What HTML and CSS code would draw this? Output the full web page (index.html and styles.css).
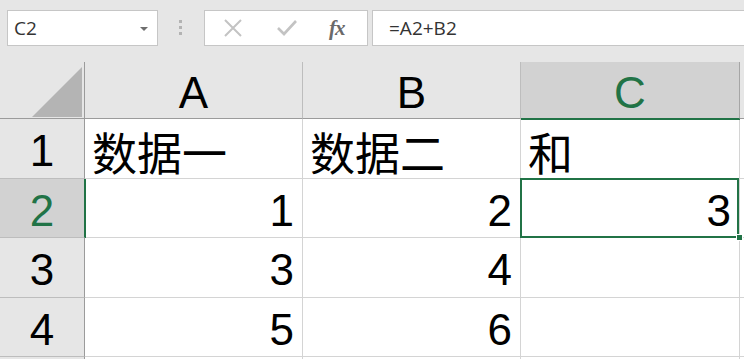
FILE: index.html
```html
<!doctype html>
<html lang="zh-CN">

<head>
  <meta charset="UTF-8" />
  <meta name="viewport" content="width=device-width, initial-scale=1.0" />
  <title>Sheet1</title>
  <link rel="stylesheet" href="styles.css">
</head>

<body>
  <div class="app">
    <div class="formula-bar">
      <div class="name-box">
        <span class="name-text">C2</span>
        <span class="caret"></span>
      </div>

      <div class="grip">
        <i></i><i></i><i></i>
      </div>

      <div class="fx-buttons">
        <svg class="fx-icon" width="20" height="18" viewBox="0 0 20 18">
          <path d="M2 1 L18 17 M18 1 L2 17" stroke="#c3c3c3" stroke-width="2" fill="none" />
        </svg>
        <svg class="fx-icon" width="20" height="16" viewBox="0 0 20 16">
          <path d="M1 8 L7 14 L19 1" stroke="#c3c3c3" stroke-width="2.6" fill="none" />
        </svg>
        <span class="fx-label"><i>f</i><i>x</i></span>
      </div>

      <div class="formula-input">=A2+B2</div>
    </div>

    <div class="sheet">
      <div class="corner"><span class="corner-tri"></span></div>
      <div class="col-head">A</div>
      <div class="col-head">B</div>
      <div class="col-head is-active">C</div>
      <div class="col-head col-rest"></div>

      <div class="row-head">1</div>
      <div class="cell">数据一</div>
      <div class="cell">数据二</div>
      <div class="cell">和</div>
      <div class="cell"></div>

      <div class="row-head is-active">2</div>
      <div class="cell num">1</div>
      <div class="cell num">2</div>
      <div class="cell num is-selected">3<span class="fill-handle"></span></div>
      <div class="cell"></div>

      <div class="row-head">3</div>
      <div class="cell num">3</div>
      <div class="cell num">4</div>
      <div class="cell"></div>
      <div class="cell"></div>

      <div class="row-head">4</div>
      <div class="cell num">5</div>
      <div class="cell num">6</div>
      <div class="cell"></div>
      <div class="cell"></div>

      <div class="row-head row-stub"></div>
      <div class="cell row-stub"></div>
      <div class="cell row-stub"></div>
      <div class="cell row-stub"></div>
      <div class="cell row-stub"></div>
    </div>
  </div>
</body>

</html>
```

FILE: styles.css
```css
* {
  margin: 0;
  padding: 0;
  box-sizing: border-box;
}

html,
body {
  height: 100%;
  width: 100%;
  overflow: hidden;
}

body {
  font-family: 'Liberation Sans', 'Noto Sans CJK SC', sans-serif;
  background-color: #e6e6e6;
}

.app {
  width: 744px;
  height: 359px;
  overflow: hidden;
}

/* formula bar */

.formula-bar {
  display: flex;
  align-items: stretch;
  height: 62px;
  padding: 10px 0 16px 7px;
  background-color: #e6e6e6;
  font-family: 'Open Sans', sans-serif;
  font-size: 19px;
  color: #333333;
}

.name-box {
  width: 151px;
  display: flex;
  align-items: center;
  justify-content: space-between;
  padding: 0 9px 0 6px;
  background-color: white;
  border: 1px solid #c6c6c6;
}

.caret {
  width: 0;
  height: 0;
  border-left: 4px solid transparent;
  border-right: 4px solid transparent;
  border-top: 4px solid #6e6e6e;
  margin-top: 2px;
}

.grip {
  width: 3px;
  margin-left: 21px;
  display: flex;
  flex-direction: column;
  gap: 3px;
  padding-top: 10px;
}

.grip i {
  display: block;
  width: 3px;
  height: 3px;
  background-color: #b3b3b3;
}

.fx-buttons {
  width: 164px;
  margin-left: 22px;
  display: flex;
  align-items: center;
  padding-left: 18px;
  gap: 34px;
  background-color: white;
  border: 1px solid #c6c6c6;
}

.fx-label {
  font-family: 'Liberation Serif', serif;
  font-size: 21px;
  font-weight: bold;
  color: #6a6a6a;
  letter-spacing: -1px;
  margin-left: -2px;
}

.formula-input {
  flex: 1;
  margin-left: 4px;
  margin-right: -2px;
  display: flex;
  align-items: center;
  padding-left: 16px;
  background-color: white;
  border: 1px solid #c6c6c6;
}

/* sheet grid */

.sheet {
  display: grid;
  grid-template-columns: 85px 218px 218px 219px 1fr;
  grid-template-rows: 57px 60px 59px 60px 59px 2px;
  background-color: white;
  font-size: 44px;
  color: #000000;
}

.corner,
.col-head,
.row-head {
  background-color: #e6e6e6;
  display: flex;
  align-items: center;
  justify-content: center;
}

.corner {
  position: relative;
  border-right: 1px solid #9b9b9b;
  border-bottom: 1px solid #9b9b9b;
}

.corner-tri {
  position: absolute;
  right: 2px;
  bottom: 1px;
  width: 0;
  height: 0;
  border-left: 50px solid transparent;
  border-bottom: 50px solid #b4b4b4;
}

.col-head {
  border-right: 1px solid #bdbdbd;
  border-bottom: 1px solid #9b9b9b;
  padding-top: 5px;
}

.col-head.col-rest {
  border-right: none;
}

.col-head.is-active {
  position: relative;
  z-index: 1;
  background-color: #d2d2d2;
  color: #217346;
  border-right-color: #a6a6a6;
  border-bottom-color: #217346;
  box-shadow: 0 1px 0 #217346;
}

.row-head {
  border-right: 1px solid #9b9b9b;
  border-bottom: 1px solid #bdbdbd;
  padding-top: 5px;
}

.row-head.is-active {
  position: relative;
  z-index: 1;
  background-color: #d2d2d2;
  color: #217346;
  border-right-color: #217346;
  box-shadow: 1px 0 0 #217346;
}

.cell {
  border-right: 1px solid #d4d4d4;
  border-bottom: 1px solid #d4d4d4;
  display: flex;
  align-items: center;
  padding: 5px 8px 0 7px;
  white-space: nowrap;
  font-size: 45px;
}

.row-stub {
  border-bottom: none;
  padding: 0;
}

.cell.num {
  justify-content: flex-end;
  font-size: 44px;
}

.cell.is-selected {
  position: relative;
}

.cell.is-selected::after {
  content: "";
  position: absolute;
  top: -1px;
  left: -1px;
  right: 0;
  bottom: -1px;
  border: 2px solid #217346;
  pointer-events: none;
}

.fill-handle {
  position: absolute;
  right: -4px;
  bottom: -4px;
  width: 7px;
  height: 7px;
  background-color: #217346;
  border: 1px solid white;
  z-index: 2;
}
```
